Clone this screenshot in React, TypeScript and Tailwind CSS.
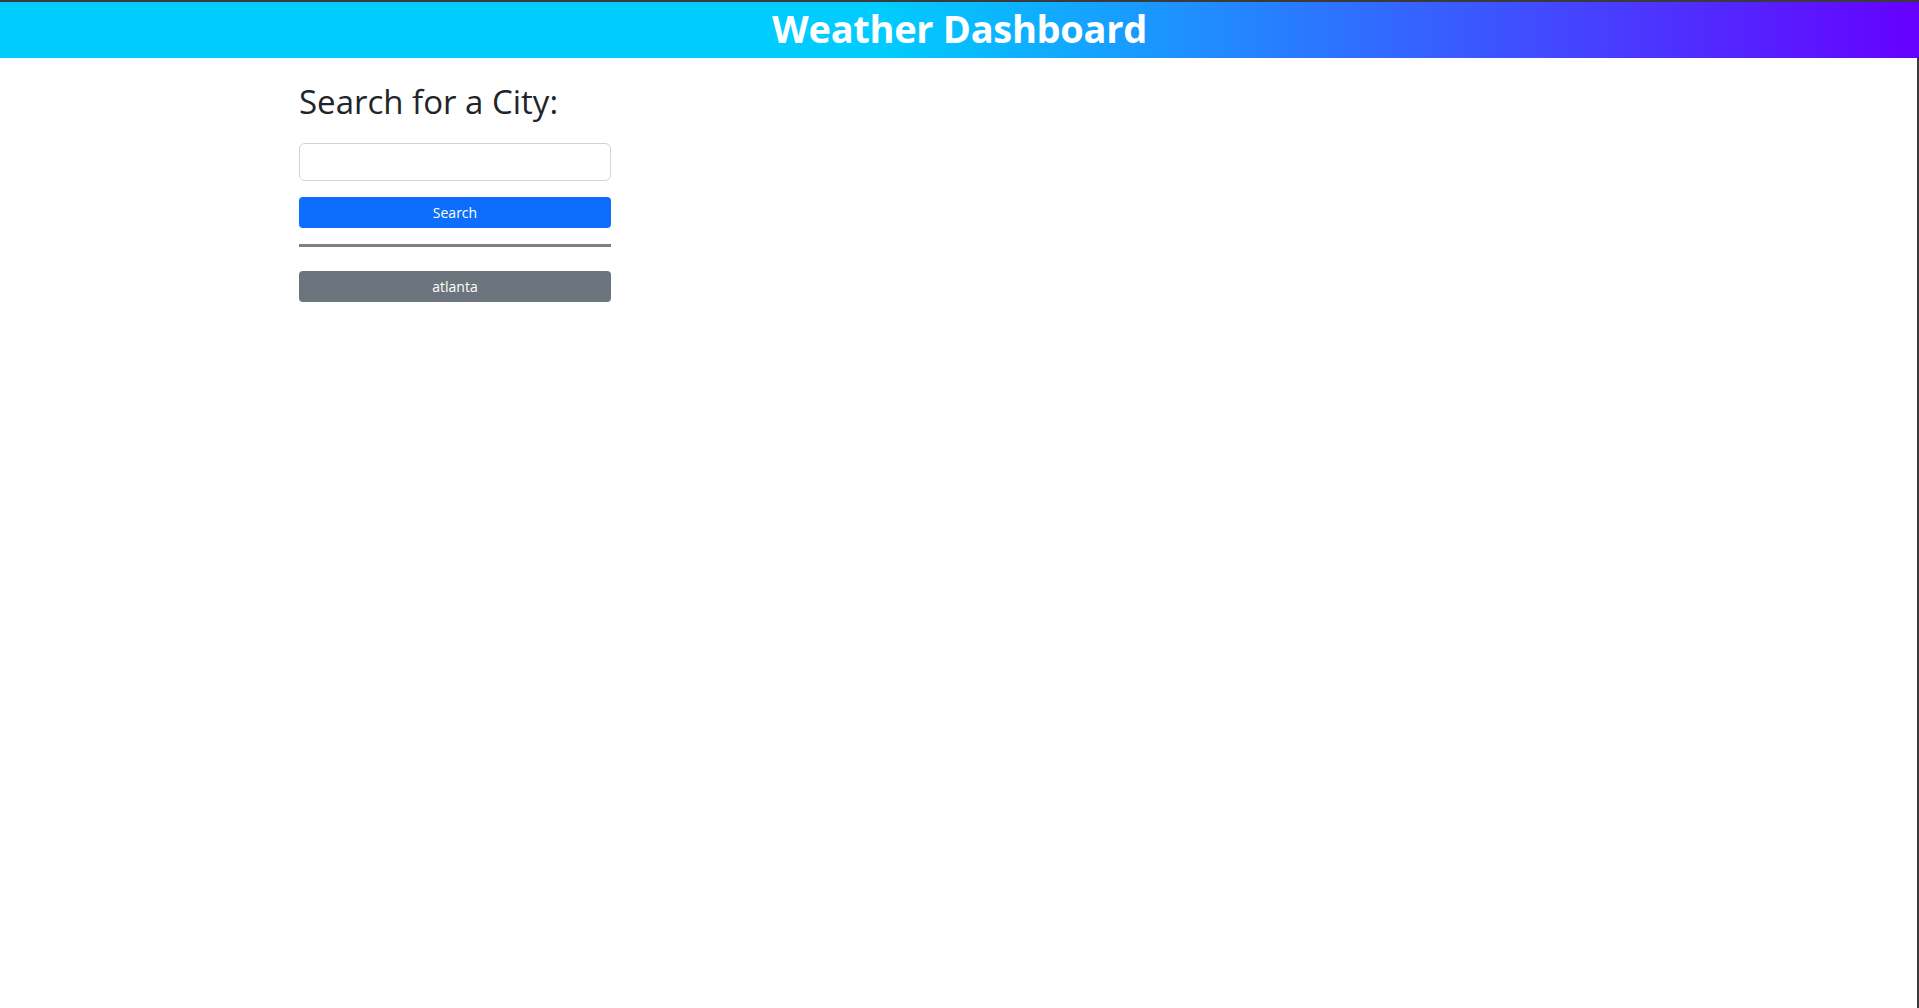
import React from "react";

export default function App() {
  const font = { fontFamily: '"Open Sans", "Noto Sans", "Liberation Sans", sans-serif' };
  return (
    <div className="min-h-[1008px] w-full bg-white border-t-2 border-[#3a3a3a]" style={font}>
      <header className="h-[56px] w-full flex items-center justify-center pb-[5px] bg-[linear-gradient(to_right,#00ccff_46%,#6600ff_100%)]">
        <h1 className="text-[38px] leading-[48px] tracking-[-0.3px] font-bold text-white m-0">Weather Dashboard</h1>
      </header>
      <div className="flex min-h-[950px]">
        <div className="flex-1 border-r-2 border-[#3a3a3a]">
          <div className="ml-[299px] w-[312px] pt-[24px] flex flex-col">
            <h2 className="text-[33px] leading-[39px] text-[#212529] font-normal m-0">Search for a City:</h2>
            <input
              type="text"
              className="mt-[22px] h-[38px] w-full rounded-[6px] border border-[#ced4da] bg-white px-3 outline-none"
            />
            <button className="mt-[16px] h-[31px] w-full rounded-[4px] bg-[#0d6efd] text-white text-[14px] leading-[21px]">
              Search
            </button>
            <div className="mt-[16px] h-[3px] w-full bg-[#808080]" />
            <button className="mt-[24px] h-[31px] w-full rounded-[4px] bg-[#6c757d] text-white text-[14px] leading-[21px]">
              atlanta
            </button>
          </div>
        </div>
      </div>
    </div>
  );
}
